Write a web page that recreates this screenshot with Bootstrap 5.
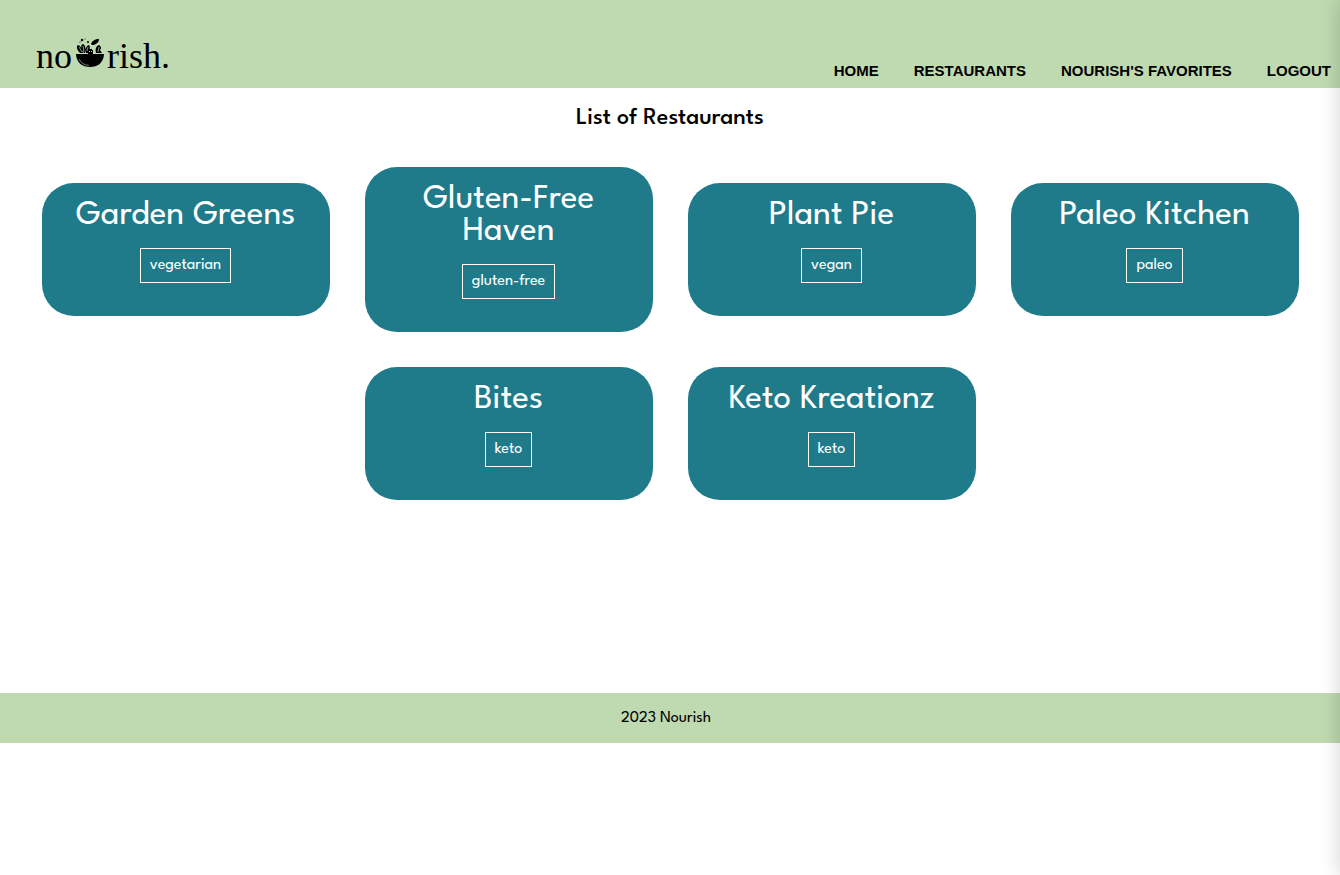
<!DOCTYPE html>
<html lang="en">
<head>
<meta charset="utf-8">
<meta name="viewport" content="width=device-width, initial-scale=1">
<title>Nourish – Restaurants</title>
<link href="https://cdn.jsdelivr.net/npm/bootstrap@5.3.0/dist/css/bootstrap.min.css" rel="stylesheet">
<style>
  body { font-family: "League Spartan", Lato, sans-serif; color: #000; background: #fff; overflow-x: hidden; }
  .band { background: #bfd9b0; }
  .site-header { min-height: 88px; padding: 0 9px 8px 36px; }
  .brand { font: 36px/40px "Liberation Serif", serif; color: #000; margin-top: 36px; }
  .brand svg { width: 28px; height: 30px; margin: 2px 3px 0 4px; }
  .menu { gap: 0 35px; font: bold 15px/18px "Liberation Sans", sans-serif; }
  .menu a { color: #000; }
  .page-title { font-size: 24px; line-height: 24px; font-weight: 500; margin: 18px 0 37px; }
  .restaurants { gap: 35px; min-height: 334px; margin-bottom: 192px; }
  .restaurant { width: 288px; border-radius: 32px; background: #1f7a8a; color: #fff; padding: 17px 24px 33px; }
  .restaurant h2 { font-size: 35px; line-height: 32px; font-weight: 400; margin-bottom: 16px; }
  .diet { border: 1px solid #fff; font-size: 16px; line-height: 17px; font-weight: 400; padding: 8px 9px; }
  .site-footer { font-size: 16px; line-height: 18px; font-weight: 400; padding: 17px 8px 15px 0; }
  .drawer-edge { top: 0; bottom: 0; left: 100%; width: 20px; box-shadow: 0 0 20px rgba(0,0,0,.19); }
</style>
</head>
<body>
<header class="site-header band d-flex flex-wrap justify-content-between align-items-end">
  <a class="brand d-flex align-items-start text-decoration-none align-self-start" href="#" aria-label="nourish.">
    <span>no</span>
    <svg viewBox="0 0 28 30" aria-hidden="true">
      <path d="M0 16h28C27.500 25 21.500 29 14 29S.5 25 0 16Z"/>
      <path d="M3 21c2 4 5 6 10 6.500" fill="none" stroke="#bfd9b0" stroke-width=".6"/>
      <path d="M4 15C1 12 0 8 2 7c3 1 4 4 5 8ZM8 15C5 11 4 7 7 6c3 2 3 6 2 9ZM10 15c-1-4 0-7 3-8 2 3 0 6-1 8ZM15 6c1-3 4-5 8-5 0 4-4 6-7 6ZM20 15c-1-4 0-7 3-8 3 2 2 4 1 5l2 3Z"/>
      <path d="M3 9l3 5M7 8l1 6M12 9l-1 4M23 9l-1 5" fill="none" stroke="#bfd9b0" stroke-width=".7"/>
      <path d="M12 12h1v-1h3v1h1v4h-5Z"/><path d="M13 13h1v1h-1ZM15 13h1v1h-1Z" fill="#bfd9b0"/>
      <circle cx="6" cy="2" r="1.200"/><circle cx="12" cy="4" r="1"/><circle cx="9" cy="1" r=".5"/><circle cx="4" cy="4" r=".6"/>
    </svg>
    <span>rish.</span>
  </a>
  <nav aria-label="Main">
    <ul class="menu list-unstyled d-flex flex-wrap mb-0">
      <li><a class="text-decoration-none" href="#">HOME</a></li>
      <li><a class="text-decoration-none" href="#">RESTAURANTS</a></li>
      <li><a class="text-decoration-none" href="#">NOURISH'S FAVORITES</a></li>
      <li><a class="text-decoration-none" href="#">LOGOUT</a></li>
    </ul>
  </nav>
</header>
<main class="text-center">
  <h1 class="page-title">List of Restaurants</h1>
  <div class="restaurants d-flex flex-wrap justify-content-center align-items-center align-content-start">
    <article class="restaurant"><h2>Garden Greens</h2><div class="diet d-inline-block align-top">vegetarian</div></article>
    <article class="restaurant"><h2>Gluten-Free Haven</h2><div class="diet d-inline-block align-top">gluten-free</div></article>
    <article class="restaurant"><h2>Plant Pie</h2><div class="diet d-inline-block align-top">vegan</div></article>
    <article class="restaurant"><h2>Paleo Kitchen</h2><div class="diet d-inline-block align-top">paleo</div></article>
    <article class="restaurant"><h2>Bites</h2><div class="diet d-inline-block align-top">keto</div></article>
    <article class="restaurant"><h2>Keto Kreationz</h2><div class="diet d-inline-block align-top">keto</div></article>
  </div>
</main>
<footer class="site-footer band text-center">2023 Nourish</footer>
<div class="drawer-edge position-fixed" aria-hidden="true"></div>
<script src="https://cdn.jsdelivr.net/npm/bootstrap@5.3.0/dist/js/bootstrap.bundle.min.js"></script>
</body>
</html>
